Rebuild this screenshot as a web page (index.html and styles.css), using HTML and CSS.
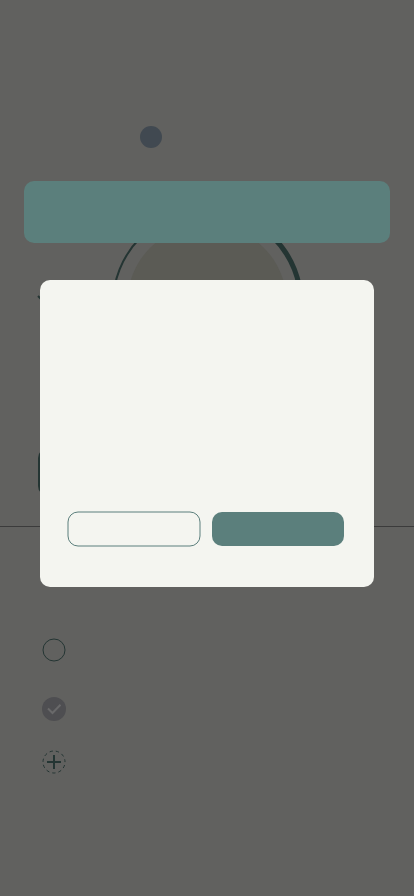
FILE: index.html
```html
<!DOCTYPE html>
<html lang="en">
<head>
<meta charset="utf-8">
<meta name="viewport" content="width=device-width, initial-scale=1">
<title>Timer</title>
<link rel="stylesheet" href="styles.css">
</head>
<body>
<main class="screen">
  <section class="timer">
    <div class="dot"></div>
    <svg class="dial" width="200" height="200" viewBox="0 0 200 200">
      <circle cx="100" cy="100" r="80" fill="#5b5b55"/>
      <circle cx="100" cy="100" r="94" fill="none" stroke="#243533" stroke-width="2"/>
      <path d="M100 6A94 94 0 0 1 194 100" fill="none" stroke="#243533" stroke-width="5"/>
    </svg>
    <svg class="chevron" width="12" height="8" viewBox="0 0 12 8" fill="none" stroke="#243533" stroke-width="2"><path d="M1 1l5 5 5-5"/></svg>
    <div class="start"></div>
  </section>
  <section class="tasks">
    <svg width="24" height="24" viewBox="0 0 24 24" fill="none" stroke="#243533"><circle cx="12" cy="12" r="11"/></svg>
    <svg width="24" height="24" viewBox="0 0 24 24" fill="none"><circle cx="12" cy="12" r="12" fill="#4e4e51"/><path d="M6 11.5l4.5 4.5 8-8.3" stroke="#69696a" stroke-width="2"/></svg>
    <svg width="24" height="24" viewBox="0 0 24 24" fill="none" stroke="#243533"><circle cx="12" cy="12" r="11" stroke-dasharray="3.28 3" stroke-dashoffset="-3.08"/><path d="M5 12h14M12 5v14" stroke-width="2"/></svg>
  </section>
  <div class="banner"></div>
  <div class="dialog">
    <div class="actions">
      <svg width="134" height="36" viewBox="0 0 134 36"><rect x="1" y="1" width="132" height="34" rx="10" fill="none" stroke="#5b7f7c"/></svg>
      <div class="confirm"></div>
    </div>
  </div>
</main>
</body>
</html>
```
FILE: styles.css
```css
* { box-sizing: border-box; }
body { margin: 0; background: #61615f; font-family: Roboto, sans-serif; }
svg { display: block; }
.screen { position: relative; height: 896px; overflow: hidden; background: #61615f; }
.timer { height: 527px; padding-top: 126px; border-bottom: 1px solid #3b3b3b; }
.dot { width: 22px; height: 22px; margin-left: 140px; border-radius: 50%; background: #414951; }
.dial { margin: 56px auto 0; }
.chevron { position: absolute; left: 37px; top: 295px; }
.start { width: 160px; height: 48px; margin: 44px 0 0 38px; border-radius: 10px; background: #243533; }
.tasks { display: grid; grid-template-rows: 59px 53px 24px; padding: 111px 42px 0; }
.banner { position: absolute; left: 24px; right: 24px; top: 181px; height: 62px; border-radius: 10px; background: #5b7f7c; }
.dialog { position: absolute; left: 40px; right: 40px; top: 280px; height: 307px; border-radius: 10px; background: #f4f5f0; padding: 0 30px 40px 27px; display: flex; align-items: flex-end; }
.actions { display: flex; align-items: center; gap: 11px; }
.confirm { width: 132px; height: 34px; border-radius: 10px; background: #5b7f7c; }
```
